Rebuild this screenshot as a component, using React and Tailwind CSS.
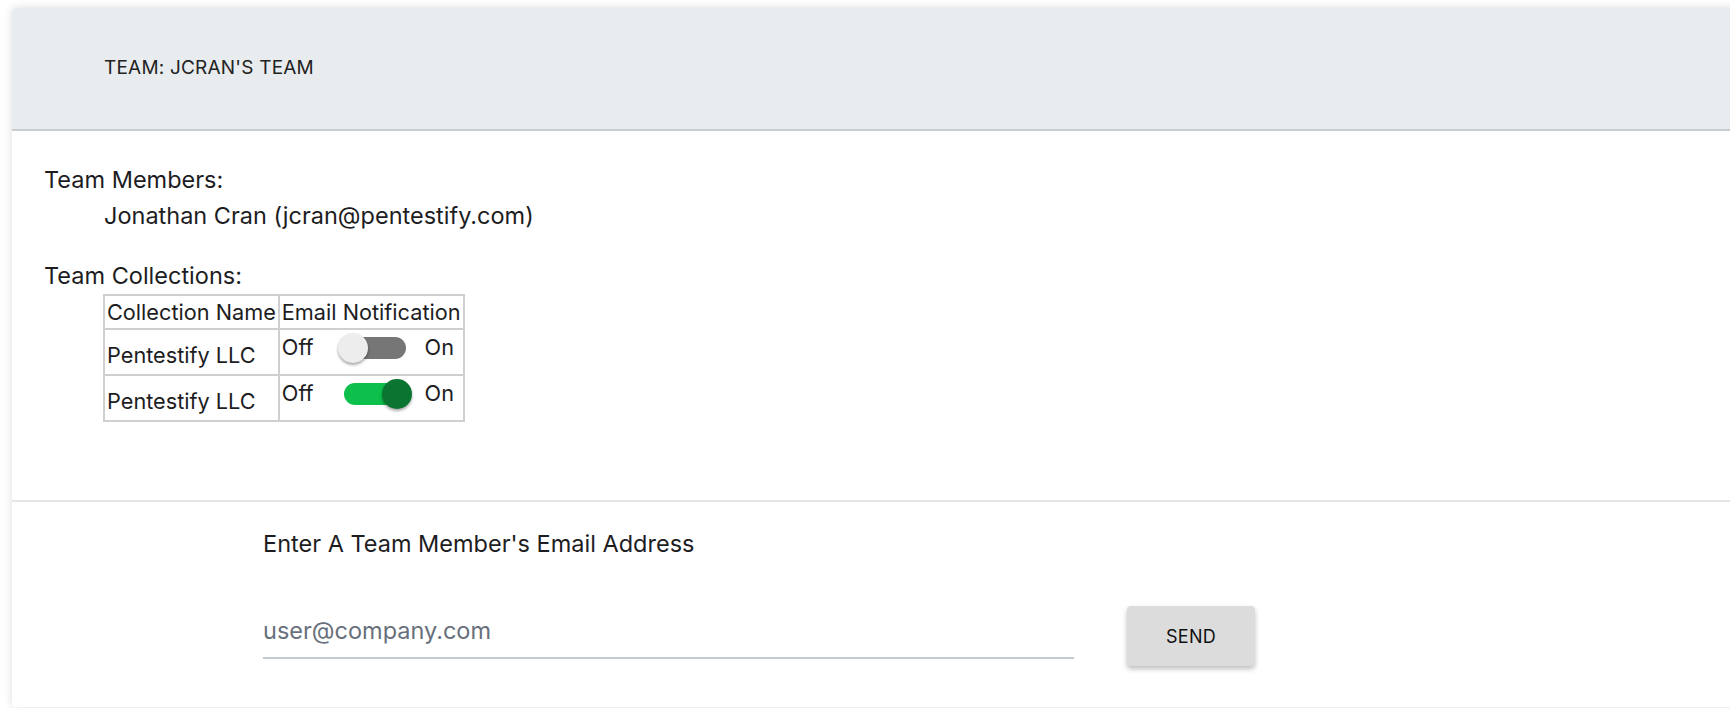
import { useState } from "react";

const font = { fontFamily: "Inter, 'Noto Sans', sans-serif" };

function Toggle({ on, onChange }) {
  return (
    <button
      type="button"
      onClick={onChange}
      className="relative ml-[24px] h-[30px] w-[74px] shrink-0"
    >
      {/* track */}
      <span
        className={`absolute top-[4px] h-[22px] rounded-full ${
          on ? "left-[6px] right-[2px] bg-[#0dbf4b]" : "left-[2px] right-[6px] bg-[#767676]"
        }`}
      />
      {/* thumb */}
      <span
        className={`absolute top-0 h-[30px] w-[30px] rounded-full shadow-[0_2px_3px_rgba(0,0,0,0.35)] ${
          on ? "right-0 bg-[#0a7531]" : "left-0 bg-[#ededed]"
        }`}
      />
    </button>
  );
}

export default function App() {
  const [collections, setCollections] = useState([
    { id: 1, name: "Pentestify LLC", notify: false },
    { id: 2, name: "Pentestify LLC", notify: true },
  ]);

  const flip = (id) =>
    setCollections((cs) =>
      cs.map((c) => (c.id === id ? { ...c, notify: !c.notify } : c))
    );

  return (
    <div
      className="h-[708px] overflow-hidden bg-white pl-[12px] pt-[8px] text-[#1d1d1f]"
      style={font}
    >
      <div className="w-[1740px] rounded-[4px] bg-white pb-[41px] shadow-[0_0_10px_rgba(0,0,0,0.14)]">
        {/* header */}
        <div className="flex h-[123px] items-center rounded-t-[4px] border-b-2 border-[#c9cdd2] bg-[#e8ecef] pl-[92px]">
          <h1 className="text-[19px] tracking-[0.2px] text-[#222]">
            TEAM: JCRAN'S TEAM
          </h1>
        </div>

        {/* members and collections */}
        <div className="pl-[32px] pt-[34px] pb-[78px] text-[23.5px]">
          <p className="leading-[30px]">Team Members:</p>
          <p className="ml-[60px] mt-[6px] leading-[30px]">
            Jonathan Cran (jcran@pentestify.com)
          </p>

          <p className="mt-[30px] leading-[30px]">Team Collections:</p>
          <table className="ml-[59px] mt-[3px] border-collapse border-2 border-[#cfcfcf] text-[21.7px]">
            <thead>
              <tr>
                <th className="h-[34px] border-2 border-[#cfcfcf] px-[2px] text-left font-normal leading-[26px]">
                  Collection Name
                </th>
                <th className="h-[34px] border-2 border-[#cfcfcf] px-[2px] text-left font-normal leading-[26px]">
                  Email Notification
                </th>
              </tr>
            </thead>
            <tbody>
              {collections.map((c) => (
                <tr key={c.id}>
                  <td className="h-[46px] border-2 border-[#cfcfcf] px-[2px] pt-[5px] align-middle leading-[26px]">
                    {c.name}
                  </td>
                  <td className="h-[46px] border-2 border-[#cfcfcf] px-[2px] pt-[3px] align-top">
                    <div className="flex h-[30px] items-center">
                      <span className="-mt-[2px]">Off</span>
                      <Toggle on={c.notify} onChange={() => flip(c.id)} />
                      <span className="-mt-[2px] ml-[13px]">On</span>
                    </div>
                  </td>
                </tr>
              ))}
            </tbody>
          </table>
        </div>

        <div className="h-[2px] bg-[#e6e6e6]" />

        {/* invite */}
        <div className="pl-[251px] pt-[27px]">
          <p className="text-[23.5px] leading-[30px]">
            Enter A Team Member's Email Address
          </p>
          <div className="mt-[47px] flex items-center gap-[53px]">
            <input
              type="email"
              placeholder="user@company.com"
              className="h-[46px] w-[811px] border-b-2 border-[#c5c9d0] pb-[10px] text-[23.5px] outline-none placeholder:text-[#68707c]"
            />
            <button
              type="button"
              className="h-[60px] w-[128px] rounded-[4px] bg-[#dcdcdc] text-[18px] tracking-[0.3px] text-[#111] shadow-[0_3px_5px_rgba(0,0,0,0.25)]"
            >
              SEND
            </button>
          </div>
        </div>
      </div>
    </div>
  );
}
